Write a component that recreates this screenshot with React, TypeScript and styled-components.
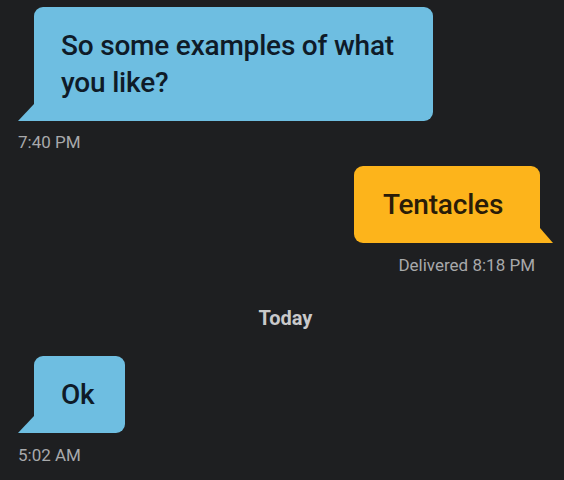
import React from "react";
import styled, { createGlobalStyle, css } from "styled-components";

const Global = createGlobalStyle`
  html, body { margin: 0; padding: 0; background: #1e1f21; }
  body { font-family: Roboto, "Liberation Sans", sans-serif; }
`;

const Page = styled.div`
  width: 564px;
  height: 480px;
  box-sizing: border-box;
  padding: 7px 11px 0 18px;
  display: flex;
  flex-direction: column;
  background: #1e1f21;
  overflow: hidden;
`;

const Row = styled.div<{ $side: "left" | "right"; $top?: number }>`
  display: flex;
  margin-top: ${(p) => p.$top ?? 0}px;
  justify-content: ${(p) => (p.$side === "left" ? "flex-start" : "flex-end")};
  padding: ${(p) => (p.$side === "left" ? "0 0 0 16px" : "0 13px 0 0")};
`;

const Bubble = styled.div<{ $side: "left" | "right"; $w: number }>`
  position: relative;
  box-sizing: border-box;
  width: ${(p) => p.$w}px;
  padding: 20px 0 20px 27px;
  font-size: 28px;
  line-height: 37px;
  font-weight: 500;
  letter-spacing: -0.2px;
  ${(p) =>
    p.$side === "left"
      ? css`
          background: #6ebee1;
          color: #0f1b28;
          border-radius: 9px 9px 9px 0;
        `
      : css`
          background: #fdb41b;
          color: #2a1c08;
          border-radius: 9px 9px 0 9px;
          padding-left: 29px;
        `}
  &::after {
    content: "";
    position: absolute;
    bottom: 0;
    width: 16px;
    height: 17px;
    background: inherit;
    ${(p) =>
      p.$side === "left"
        ? css`
            left: -16px;
            clip-path: polygon(100% 0, 100% 100%, 0 100%);
          `
        : css`
            right: -13px;
            width: 13px;
            height: 15px;
            clip-path: polygon(0 0, 100% 100%, 0 100%);
          `}
  }
`;

const Meta = styled.div<{ $align: "left" | "right"; $top: number }>`
  margin-top: ${(p) => p.$top}px;
  font-size: 17px;
  line-height: 20px;
  color: #a8a9ab;
  text-align: ${(p) => p.$align};
  padding-right: ${(p) => (p.$align === "right" ? "18px" : "0")};
`;

const Divider = styled.div`
  margin: 31px 0 26px;
  text-align: center;
  font-size: 20px;
  line-height: 24px;
  font-weight: 700;
  color: #c9c9ca;
`;

export default function App() {
  return (
    <>
      <Global />
      <Page>
        <Row $side="left">
          <Bubble $side="left" $w={399}>
            So some examples of what you like?
          </Bubble>
        </Row>
        <Meta $align="left" $top={11}>7:40 PM</Meta>
        <Row $side="right" $top={14}>
          <Bubble $side="right" $w={186}>Tentacles</Bubble>
        </Row>
        <Meta $align="right" $top={12}>Delivered 8:18 PM</Meta>
        <Divider>Today</Divider>
        <Row $side="left">
          <Bubble $side="left" $w={91}>Ok</Bubble>
        </Row>
        <Meta $align="left" $top={12}>5:02 AM</Meta>
      </Page>
    </>
  );
}
